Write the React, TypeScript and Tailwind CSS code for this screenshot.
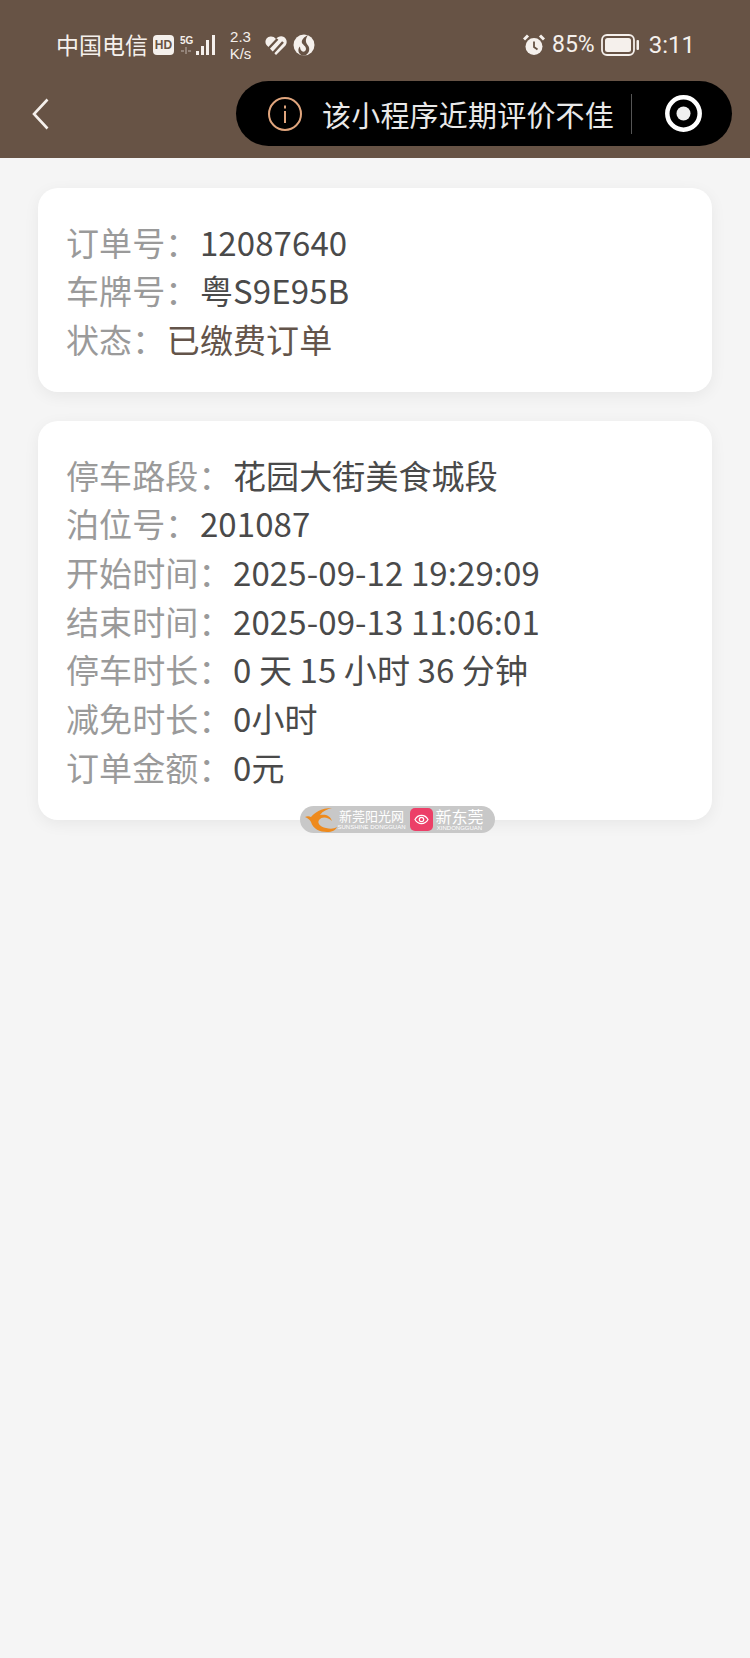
import React from "react";

const CJK = `"Noto Sans CJK SC", "Noto Sans", sans-serif`;

function Row({ label, value, dark }: { label: string; value: string; dark?: boolean }) {
  return (
    <div className="flex h-[48.7px] items-center text-[33px] tracking-[0.1px] whitespace-nowrap">
      <span className="text-[#9a9a9a]">{label}</span>
      <span className={dark ? "ml-[1.5px] text-[#63544a]" : "ml-[1.5px] text-[#4a4a4a]"}>{value}</span>
    </div>
  );
}

function Card({ children }: { children: React.ReactNode }) {
  return (
    <div className="rounded-[20px] bg-white pt-[30px] pb-[28px] pl-[28px] pr-[30px] shadow-[0_4px_16px_rgba(0,0,0,0.06)]">{children}</div>
  );
}

export default function App() {
  return (
    <div className="relative flex h-[1658px] w-[750px] flex-col overflow-hidden bg-[#f5f5f5]" style={{ fontFamily: CJK }}>
      <header className="h-[158px] bg-[#675345] shrink-0 pt-[30px]">
        <div className="flex h-[30px] items-center justify-between pl-[56px] pr-[55px] text-[#f5f0ec]">
          <div className="flex items-center">
            <span className="pb-[2px] text-[23px] leading-[30px]">中国电信</span>
            <span className="ml-[5px] flex h-[20px] w-[21px] items-center justify-center rounded-[4px] bg-[#f5f0ec] text-[12px] font-bold text-[#675345]" style={{ fontFamily: '"Liberation Sans", sans-serif' }}>HD</span>
            <svg className="ml-[6px]" width="37" height="22" viewBox="0 0 37 22">
              <text x="0" y="10" fill="#f5f0ec" fontSize="10" fontWeight="700" fontFamily="Liberation Sans">5G</text>
              <path d="M1 17h3M6 13v7M8 17h3" stroke="#a2948a" strokeWidth="1.5" fill="none" />
              <rect x="16" y="17" width="3" height="4" fill="#f5f0ec" />
              <rect x="21" y="12" width="3" height="9" fill="#f5f0ec" />
              <rect x="26" y="6" width="3" height="15" fill="#f5f0ec" />
              <rect x="32" y="1" width="3" height="20" fill="#f5f0ec" />
            </svg>
            <div className="ml-[11px] flex w-[25px] flex-col items-center text-[15px] leading-[17px]" style={{ fontFamily: '"Liberation Sans", sans-serif' }}>
              <span>2.3</span>
              <span>K/s</span>
            </div>
            <svg className="ml-[12px]" width="22" height="19" viewBox="0 0 22 19">
              <path d="M11 19 1.500 9C-1 5.500 1 1 5.500 0.500 7.500 0.300 9.500 1 11 3 13 0.500 16 -0.500 19 1 22 3 22.500 7 20.500 9.500Z" fill="#f5f0ec" />
              <path d="M3 13 12.500 3M8 17l10-11" stroke="#675345" strokeWidth="2.4" />
            </svg>
            <svg className="ml-[6px]" width="22" height="22" viewBox="0 0 22 22">
              <circle cx="11" cy="11" r="10.500" fill="#f5f0ec" />
              <path d="M15 1C11 3 8 6 9 9c1 2 4 3 4 6 0 2-2 3-3.500 2.500C8 17 7 15 7 12.500 4 15 5.500 20 9 21.500h3C17 19 17 14 15 11.500 13 9 11.500 6 15 1Z" fill="#675345" />
            </svg>
          </div>
          <div className="flex items-center">
            <svg width="22" height="22" viewBox="0 0 22 22">
              <circle cx="11" cy="12.500" r="8.500" fill="#f5f0ec" />
              <path d="M11 7.500v5.500l3.500 2.500" stroke="#675345" strokeWidth="1.800" fill="none" />
              <path d="M1 5.500 5 1.500M21 5.500 17 1.500" stroke="#f5f0ec" strokeWidth="3" />
            </svg>
            <span className="ml-[7px] text-[23px] leading-[30px]" style={{ fontFamily: '"Roboto", sans-serif' }}>85%</span>
            <svg className="ml-[6px]" width="38" height="22" viewBox="0 0 38 22">
              <rect x="1" y="1" width="32" height="20" rx="5" fill="none" stroke="#f5f0ec" strokeWidth="1.800" />
              <rect x="4" y="4" width="26" height="14" rx="2.500" fill="#f5f0ec" />
              <rect x="35.500" y="6" width="2.500" height="10" rx="1" fill="#f5f0ec" />
            </svg>
            <span className="ml-[10px] text-[24px] leading-[30px]" style={{ fontFamily: '"Roboto", sans-serif' }}>3:11</span>
          </div>
        </div>
        <div className="mt-[21px] flex items-center justify-between pr-[18px] pl-[32px]">
          <svg width="17" height="32" viewBox="0 0 17 32">
            <path d="M15.500 1.500 2 16l13.500 14.500" fill="none" stroke="#f5f0ec" strokeWidth="2.600" />
          </svg>
          <div className="flex h-[65px] w-[496px] items-center rounded-[33px] bg-black pl-[32px]">
            <svg width="34" height="34" viewBox="0 0 34 34">
              <circle cx="17" cy="17" r="16" fill="none" stroke="#e0a57d" strokeWidth="2" />
              <rect x="16" y="14" width="2" height="12" fill="#e0a57d" />
              <rect x="16" y="8.500" width="2" height="3" fill="#e0a57d" />
            </svg>
            <span className="ml-[20px] text-[29px] leading-[40px] tracking-[0.2px] text-[#e9e9e9]">该小程序近期评价不佳</span>
            <span className="ml-[17px] h-[40px] w-px bg-[#555555]" />
            <svg className="ml-[33px]" width="37" height="37" viewBox="0 0 37 37">
              <circle cx="18.500" cy="18.500" r="16.200" fill="none" stroke="white" strokeWidth="4.500" />
              <circle cx="18.500" cy="18.500" r="7" fill="#f0f0f0" />
            </svg>
          </div>
        </div>
      </header>
      <main className="flex flex-col gap-[29px] px-[38px] pt-[30px]">
        <Card>
          <Row label="订单号：" value="12087640" />
          <Row label="车牌号：" value="粤S9E95B" />
          <Row label="状态：" value="已缴费订单" dark />
        </Card>
        <Card>
          <Row label="停车路段：" value="花园大街美食城段" />
          <Row label="泊位号：" value="201087" />
          <Row label="开始时间：" value="2025-09-12 19:29:09" />
          <Row label="结束时间：" value="2025-09-13 11:06:01" />
          <Row label="停车时长：" value="0 天 15 小时 36 分钟" />
          <Row label="减免时长：" value="0小时" />
          <Row label="订单金额：" value="0元" />
        </Card>
      </main>
      <div className="absolute top-[806px] left-[300px] flex h-[27px] w-[195px] items-center rounded-[14px] bg-[#c8c8c8] pl-[5px] text-white">
        <svg width="32" height="26" viewBox="0 0 32 26">
          <path d="M27 1C16 1 9 6 6 10 4 9 2 9 0 10c3 1 5 3 6 5 2 7 9 10 16 10 5 0 9-2 10-5-3 2-7 2-11 1-6-1-9-5-7-8 3-4 9-3 13 1-2-6-7-7-12-6 3-4 7-6 12-7Z" fill="#ee8a1d" />
        </svg>
        <div className="ml-[1px] flex w-[67px] flex-col items-center whitespace-nowrap">
          <span className="text-[13px] leading-[14px]">新莞阳光网</span>
          <span className="text-[6px] leading-[8px]" style={{ fontFamily: '"Liberation Sans", sans-serif' }}>SUNSHINE DONGGUAN</span>
        </div>
        <div className="ml-[5px] flex h-[23px] w-[23px] items-center justify-center rounded-[5px] bg-[#ec3f68]">
          <svg width="15" height="13" viewBox="0 0 15 13">
            <path d="M1 6.500c3-5.500 10-5.500 13 0-3 5.500-10 5.500-13 0Z" fill="none" stroke="white" strokeWidth="1.200" />
            <circle cx="7.500" cy="6.500" r="2.200" fill="none" stroke="white" strokeWidth="1.200" />
          </svg>
        </div>
        <div className="ml-[1px] flex w-[51px] flex-col items-center whitespace-nowrap">
          <span className="text-[16px] leading-[17px]">新东莞</span>
          <span className="text-[6px] leading-[6px]" style={{ fontFamily: '"Liberation Sans", sans-serif' }}>XINDONGGUAN</span>
        </div>
      </div>
    </div>
  );
}
